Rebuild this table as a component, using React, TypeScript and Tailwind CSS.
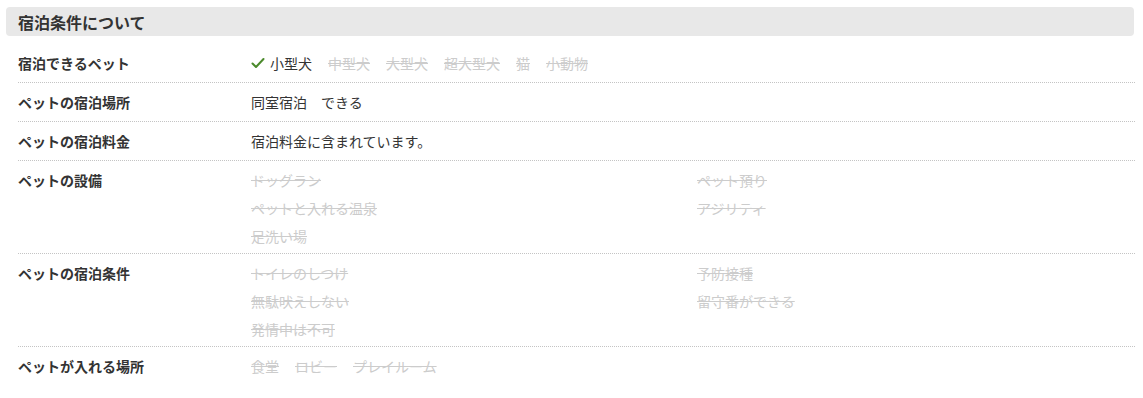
import { Fragment } from "react";

type Item = { label: string; ok?: boolean };

type Row = {
  label: string;
  items?: Item[];
  text?: string;
  columns?: boolean;
};

const rows: Row[] = [
  {
    label: "宿泊できるペット",
    items: [
      { label: "小型犬", ok: true },
      { label: "中型犬" },
      { label: "大型犬" },
      { label: "超大型犬" },
      { label: "猫" },
      { label: "小動物" },
    ],
  },
  { label: "ペットの宿泊場所", text: "同室宿泊　できる" },
  { label: "ペットの宿泊料金", text: "宿泊料金に含まれています。" },
  {
    label: "ペットの設備",
    columns: true,
    items: [
      { label: "ドッグラン" },
      { label: "ペット預り" },
      { label: "ペットと入れる温泉" },
      { label: "アジリティ" },
      { label: "足洗い場" },
    ],
  },
  {
    label: "ペットの宿泊条件",
    columns: true,
    items: [
      { label: "トイレのしつけ" },
      { label: "予防接種" },
      { label: "無駄吠えしない" },
      { label: "留守番ができる" },
      { label: "発情中は不可" },
    ],
  },
  {
    label: "ペットが入れる場所",
    items: [{ label: "食堂" }, { label: "ロビー" }, { label: "プレイルーム" }],
  },
];

function CheckMark() {
  return (
    <svg viewBox="0 0 14 14" className="mr-[5px] h-[14px] w-[14px]" fill="none">
      <path d="M1.5 7.5 L5 11 L12.5 3" stroke="#4b8a2c" strokeWidth="2" strokeLinecap="round" strokeLinejoin="round" />
    </svg>
  );
}

function Tag({ item }: { item: Item }) {
  if (item.ok) {
    return (
      <span className="flex items-center text-[#333]">
        <CheckMark />
        {item.label}
      </span>
    );
  }
  return <span className="text-[#cccccc] line-through decoration-[#cccccc]">{item.label}</span>;
}

export default function App() {
  return (
    <div
      className="min-h-[398px] bg-white text-[14px] text-[#333]"
      style={{ fontFamily: '"Noto Sans CJK JP", "Noto Sans", sans-serif' }}
    >
      <div className="ml-[6px] mr-[9px] mt-[7px] flex h-[29px] items-center rounded-[4px] bg-[#e8e8e8] px-3">
        <h2 className="text-[16px] font-bold leading-none text-[#333]">宿泊条件について</h2>
      </div>
      <dl className="ml-[18px] mr-[8px] mt-2">
        {rows.map((row, i) => (
          <div
            key={row.label}
            className={
              "flex pt-[5px] " +
              (row.columns ? "pb-[3px] " : "pb-[5px] ") +
              (i < rows.length - 1 ? "border-b border-dotted border-[#c4c4c4]" : "")
            }
          >
            <dt className="w-[233px] shrink-0 font-bold leading-[28px]">{row.label}</dt>
            <dd className="flex-1 leading-[28px]">
              {row.text && <span>{row.text}</span>}
              {row.items && !row.columns && (
                <div className="flex gap-4">
                  {row.items.map((it) => (
                    <Tag key={it.label} item={it} />
                  ))}
                </div>
              )}
              {row.items && row.columns && (
                <div className="grid grid-cols-[446px_1fr]">
                  {row.items.map((it) => (
                    <Fragment key={it.label}>
                      <div>
                        <Tag item={it} />
                      </div>
                    </Fragment>
                  ))}
                </div>
              )}
            </dd>
          </div>
        ))}
      </dl>
    </div>
  );
}
